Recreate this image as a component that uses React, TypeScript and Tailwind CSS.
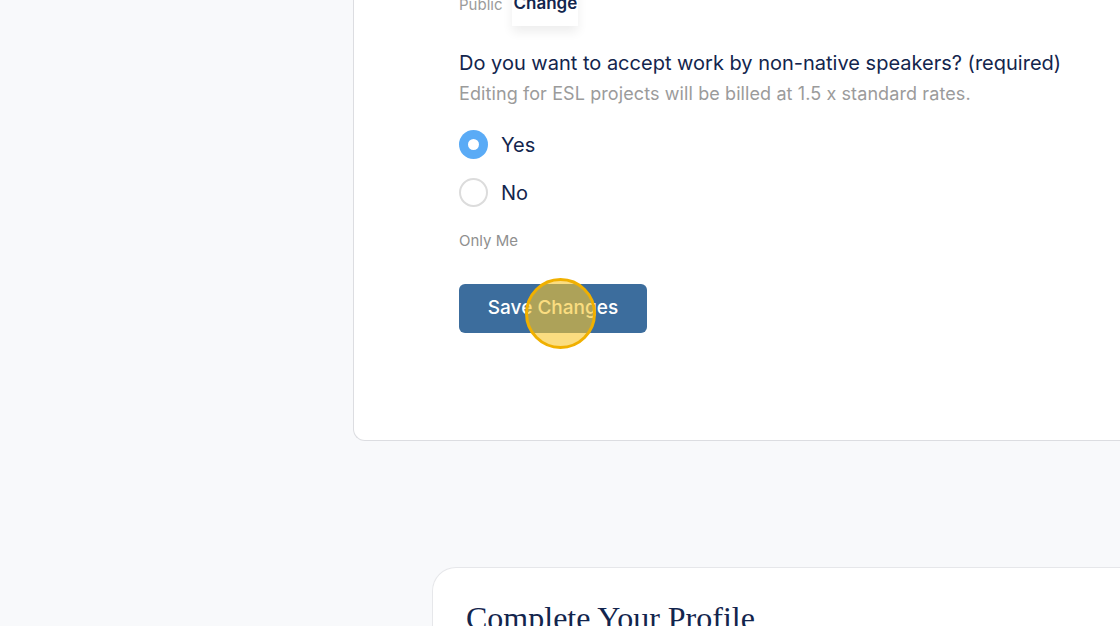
import React, { useState } from 'react';

const App = () => {
  const [accept, setAccept] = useState('yes');

  return (
    <div className="h-[626px] w-[1120px] overflow-hidden bg-[#f8f9fb]" style={{ fontFamily: 'Inter, "Liberation Sans", sans-serif' }}>
      <div className="ml-[353px] rounded-bl-xl border-b border-l border-[#dcdde1] bg-white pl-[105px] pb-[107px]">
        <div className="-mt-[14px] flex items-start">
          <span className="pt-[8px] text-[15px] text-[#9b9b9b]">Public</span>
          <span className="ml-[10px] bg-white px-[1px] pt-[5px] pb-[9px] text-[17px] font-semibold text-[#13254d] shadow-[0_6px_10px_rgba(0,0,0,0.07)]">
            Change
          </span>
        </div>

        <div className="mt-[22px]">
          <h3 className="text-[20px] leading-[30px] text-[#13254d]">Do you want to accept work by non-native speakers? (required)</h3>
          <p className="mt-[2px] text-[18px] leading-[28px] tracking-[0.1px] text-[#9b9b9b]">Editing for ESL projects will be billed at 1.5 x standard rates.</p>
        </div>

        <div className="mt-[22px] flex flex-col gap-[18px]">
          {[
            { key: 'yes', label: 'Yes' },
            { key: 'no', label: 'No' },
          ].map((opt) => (
            <button key={opt.key} onClick={() => setAccept(opt.key)} className="flex items-center gap-[13px] text-left">
              {accept === opt.key ? (
                <span className="flex h-[29px] w-[29px] items-center justify-center rounded-full bg-[#5aabf6]">
                  <span className="h-[11px] w-[11px] rounded-full bg-white"></span>
                </span>
              ) : (
                <span className="h-[29px] w-[29px] rounded-full border-2 border-[#dcdcdc] bg-white"></span>
              )}
              <span className="text-[20px] text-[#13254d]">{opt.label}</span>
            </button>
          ))}
        </div>

        <p className="mt-[22px] text-[15px] text-[#8f8f8f]">Only Me</p>

        <div className="relative mt-[32px] w-fit">
          <button className="h-[49px] w-[188px] rounded-md bg-[#3c6d9d] text-[19px] font-medium text-white">Save Changes</button>
          <span className="absolute left-[66px] top-[-6px] h-[71px] w-[71px] rounded-full border-[3px] border-[#f0b000] bg-[#f8c62c]/60"></span>
        </div>
      </div>

      <div className="ml-[432px] mt-[126px] rounded-tl-[24px] border-l border-t border-[#e6e7ea] bg-white pl-[33px] pt-[26px]">
        <h2 className="text-[32px] text-[#13254d]" style={{ fontFamily: '"Liberation Serif", "DejaVu Serif", serif' }}>Complete Your Profile</h2>
      </div>
    </div>
  );
};

export default App;
